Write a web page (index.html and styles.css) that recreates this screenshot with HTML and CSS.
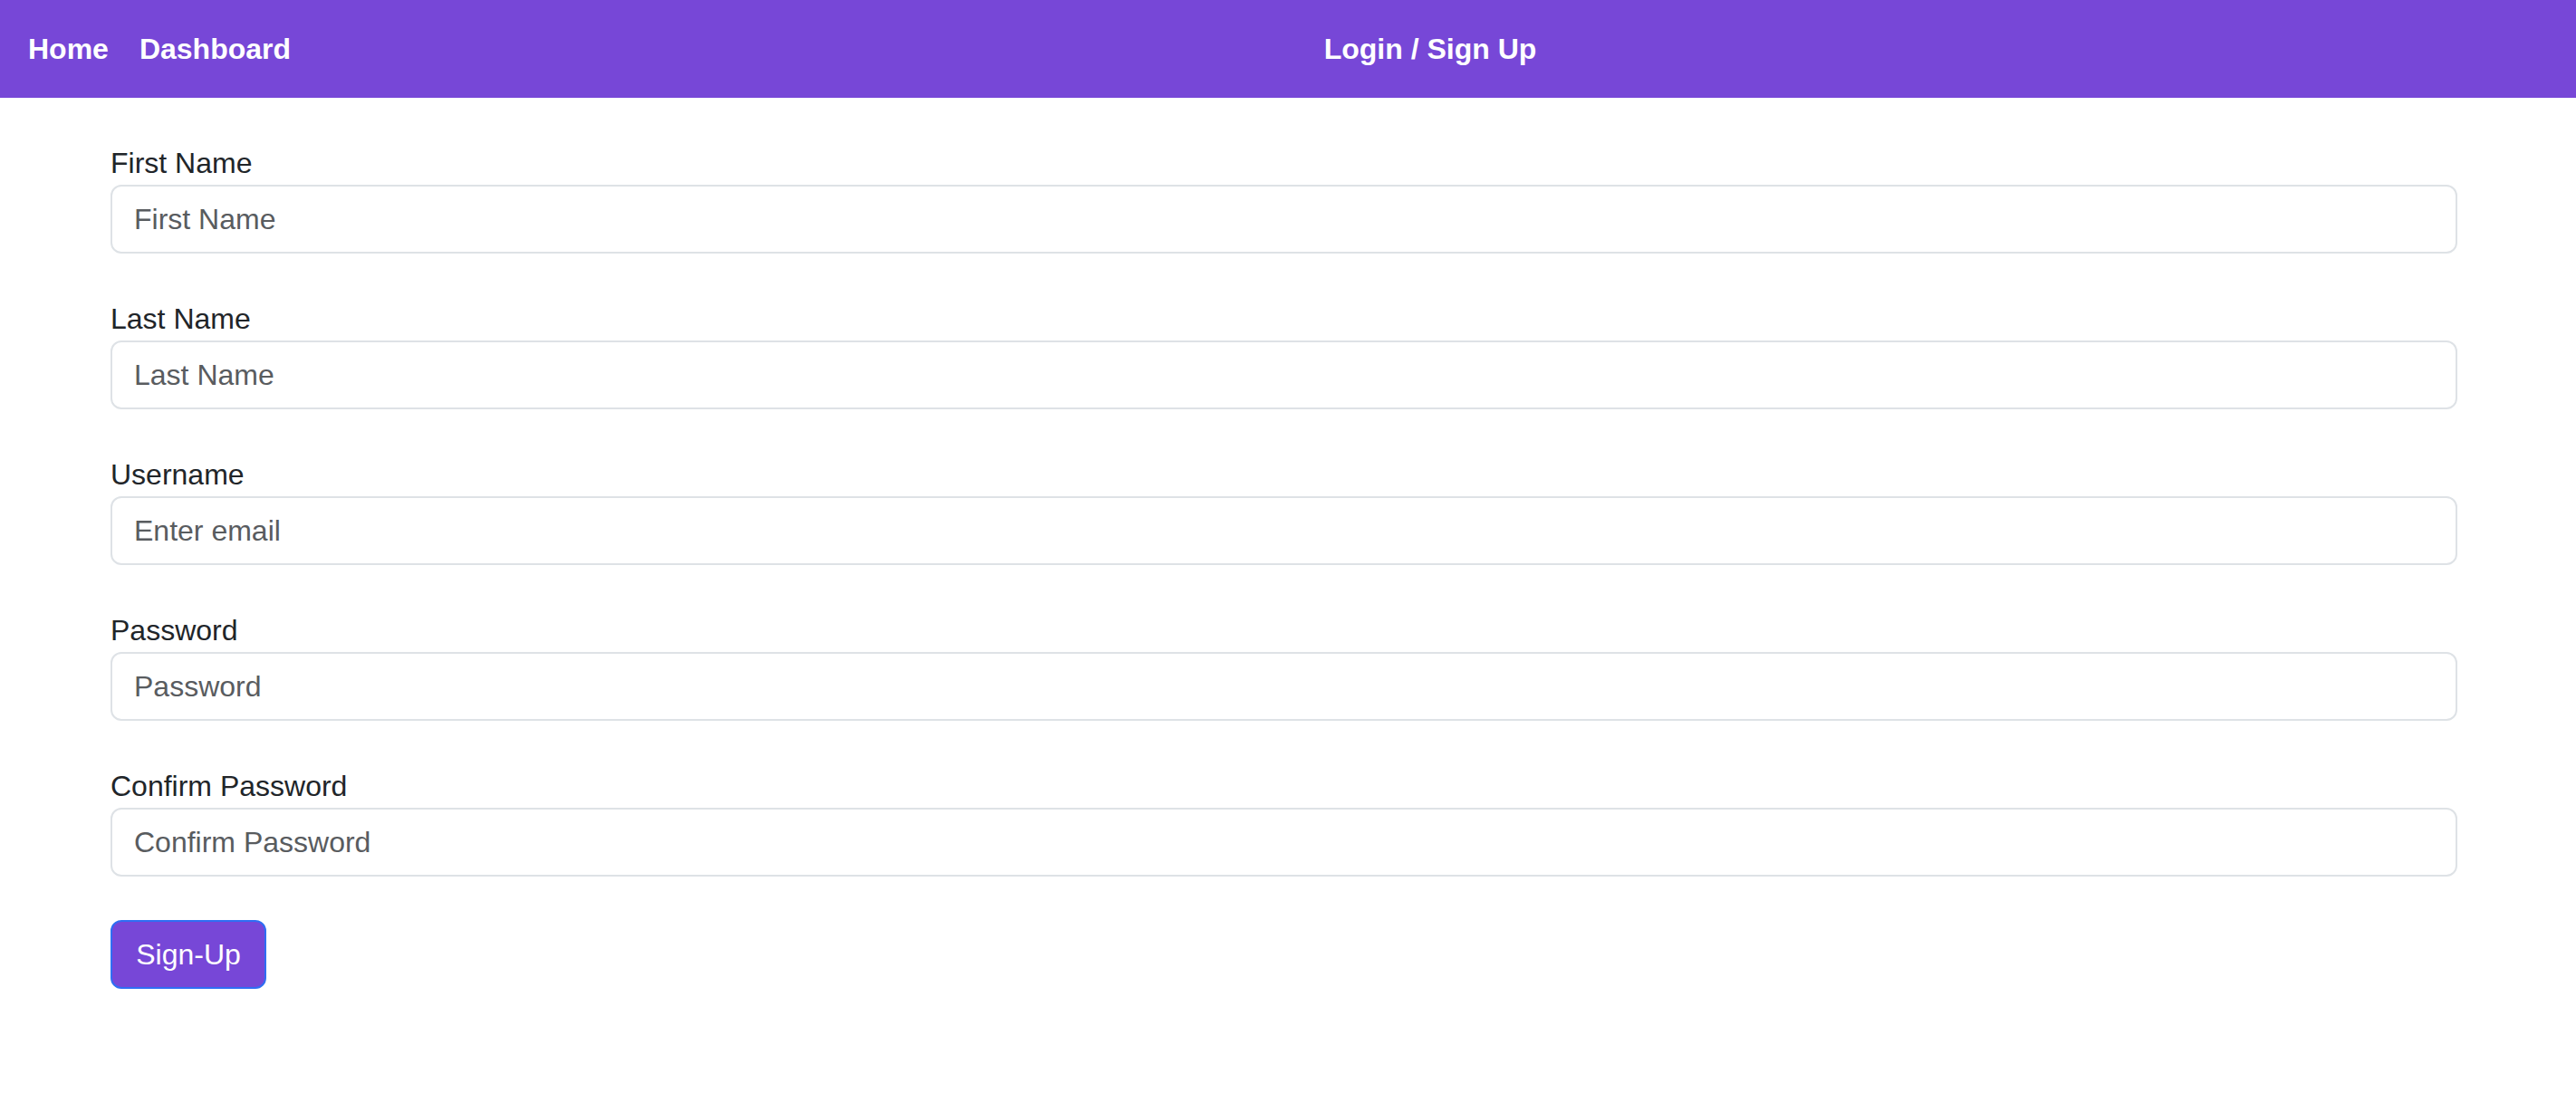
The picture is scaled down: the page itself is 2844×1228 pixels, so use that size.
FILE: index.html
```html
<!DOCTYPE html>
<html>
<head>
<meta charset="utf-8">
<link rel="stylesheet" href="styles.css">
</head>
<body>
<nav class="navbar">
  <div class="nav-links">
    <a class="nav-link" href="#">Home</a>
    <a class="nav-link" href="#">Dashboard</a>
  </div>
  <div class="nav-title">Login / Sign Up</div>
  <div class="nav-spacer"></div>
</nav>
<main class="container">
  <form class="form">
    <div class="group">
      <label class="label">First Name</label>
      <input class="control" type="text" placeholder="First Name">
    </div>
    <div class="group">
      <label class="label">Last Name</label>
      <input class="control" type="text" placeholder="Last Name">
    </div>
    <div class="group">
      <label class="label">Username</label>
      <input class="control" type="email" placeholder="Enter email">
    </div>
    <div class="group">
      <label class="label">Password</label>
      <input class="control" type="password" placeholder="Password">
    </div>
    <div class="group">
      <label class="label">Confirm Password</label>
      <input class="control" type="password" placeholder="Confirm Password">
    </div>
    <button class="btn" type="button">Sign-Up</button>
  </form>
</main>
</body>
</html>
```
FILE: styles.css
```css
* { box-sizing: border-box; }
html, body { margin: 0; padding: 0; background: #fff; }
body {
  font-family: "Liberation Sans", Arial, sans-serif;
  color: #212529;
  font-size: 32px;
}
.navbar {
  height: 108px;
  background: #7747d7;
  display: flex;
  align-items: center;
  justify-content: space-between;
  padding: 0 7px 0 31px;
  color: #fff;
  font-weight: bold;
  font-size: 32px;
}
.nav-links { display: flex; gap: 34px; }
.nav-link { color: #fff; text-decoration: none; }
.nav-title { color: #fff; }
.nav-spacer { width: 0; }
.container {
  padding: 48px 131px 0 122px;
}
.form { display: flex; flex-direction: column; }
.group { display: flex; flex-direction: column; margin-bottom: 48px; }
.label { line-height: 48px; font-size: 32px; color: #212529; }
.control {
  height: 76px;
  width: 100%;
  border: 2px solid #dee2e6;
  border-radius: 12px;
  padding: 0 24px;
  font-family: "Liberation Sans", Arial, sans-serif;
  font-size: 32px;
  color: #212529;
  background: #fff;
  outline: none;
}
.control::placeholder { color: #595c5f; opacity: 1; }
.btn {
  align-self: flex-start;
  width: 172px;
  height: 76px;
  background: #7747d7;
  color: #fff;
  border: 2px solid #2f6ef3;
  border-radius: 12px;
  font-family: "Liberation Sans", Arial, sans-serif;
  font-size: 32px;
  padding: 0;
}
```
